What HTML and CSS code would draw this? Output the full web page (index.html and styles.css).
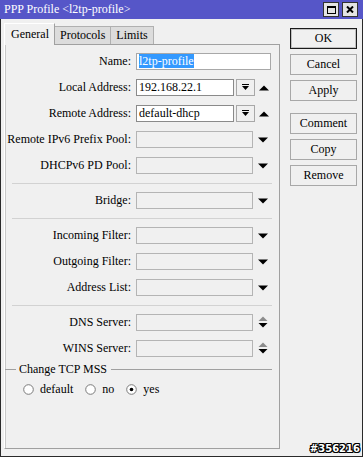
FILE: index.html
```html
<!DOCTYPE html>
<html lang="en">
  <head>
    <meta charset="UTF-8" />
    <title>PPP Profile</title>
    <link rel="stylesheet" href="styles.css">
  </head>
  <body>
    <div class="window">
      <div class="titlebar">
        <span class="title">PPP Profile &lt;l2tp-profile&gt;</span>
        <div class="win-btns">
          <span class="win-btn">
            <svg width="9" height="8" viewBox="0 0 9 8"><rect x="0.5" y="0.5" width="8" height="7" fill="none" stroke="#000"/><rect x="0" y="0" width="9" height="2" fill="#000"/></svg>
          </span>
          <span class="win-btn">
            <svg width="8" height="7" viewBox="0 0 8 7"><path d="M1 0.5 L7 6.5 M7 0.5 L1 6.5" stroke="#000" stroke-width="2"/></svg>
          </span>
        </div>
      </div>

      <div class="main">
        <div class="left">
          <div class="tabs">
            <div class="tab active">General</div>
            <div class="tab">Protocols</div>
            <div class="tab">Limits</div>
          </div>

          <div class="panel">
            <div class="row">
              <label>Name:</label>
              <div class="field w-full"><span class="sel">l2tp-profile</span></div>
            </div>
            <div class="row">
              <label>Local Address:</label>
              <div class="field w-drop">192.168.22.1</div>
              <span class="drop-btn">
                <svg width="7" height="7" viewBox="0 0 7 7"><rect x="0" y="0" width="7" height="1" fill="#000"/><polygon points="0,2 7,2 3.5,6" fill="#000"/></svg>
              </span>
              <svg class="arrow" width="10" height="6" viewBox="0 0 10 6"><polygon points="0,5.5 10,5.5 5,0.5" fill="#000"/></svg>
            </div>
            <div class="row">
              <label>Remote Address:</label>
              <div class="field w-drop">default-dhcp</div>
              <span class="drop-btn">
                <svg width="7" height="7" viewBox="0 0 7 7"><rect x="0" y="0" width="7" height="1" fill="#000"/><polygon points="0,2 7,2 3.5,6" fill="#000"/></svg>
              </span>
              <svg class="arrow" width="10" height="6" viewBox="0 0 10 6"><polygon points="0,5.5 10,5.5 5,0.5" fill="#000"/></svg>
            </div>
            <div class="row">
              <label>Remote IPv6 Prefix Pool:</label>
              <div class="field off w-half"></div>
              <svg class="arrow down" width="10" height="6" viewBox="0 0 10 6"><polygon points="0,0.5 10,0.5 5,5.5" fill="#000"/></svg>
            </div>
            <div class="row">
              <label>DHCPv6 PD Pool:</label>
              <div class="field off w-half"></div>
              <svg class="arrow down" width="10" height="6" viewBox="0 0 10 6"><polygon points="0,0.5 10,0.5 5,5.5" fill="#000"/></svg>
            </div>

            <div class="sep"></div>

            <div class="row">
              <label>Bridge:</label>
              <div class="field off w-half"></div>
              <svg class="arrow down" width="10" height="6" viewBox="0 0 10 6"><polygon points="0,0.5 10,0.5 5,5.5" fill="#000"/></svg>
            </div>

            <div class="sep"></div>

            <div class="row">
              <label>Incoming Filter:</label>
              <div class="field off w-half"></div>
              <svg class="arrow down" width="10" height="6" viewBox="0 0 10 6"><polygon points="0,0.5 10,0.5 5,5.5" fill="#000"/></svg>
            </div>
            <div class="row">
              <label>Outgoing Filter:</label>
              <div class="field off w-half"></div>
              <svg class="arrow down" width="10" height="6" viewBox="0 0 10 6"><polygon points="0,0.5 10,0.5 5,5.5" fill="#000"/></svg>
            </div>
            <div class="row">
              <label>Address List:</label>
              <div class="field off w-half"></div>
              <svg class="arrow down" width="10" height="6" viewBox="0 0 10 6"><polygon points="0,0.5 10,0.5 5,5.5" fill="#000"/></svg>
            </div>

            <div class="sep"></div>

            <div class="row">
              <label>DNS Server:</label>
              <div class="field off w-half"></div>
              <svg class="arrow spin" width="10" height="13" viewBox="0 0 10 13"><polygon points="0.5,5 9.5,5 5,0.5" fill="#8c8c8c"/><polygon points="0.5,7 9.5,7 5,11.5" fill="#000"/></svg>
            </div>
            <div class="row last">
              <label>WINS Server:</label>
              <div class="field off w-half"></div>
              <svg class="arrow spin" width="10" height="13" viewBox="0 0 10 13"><polygon points="0.5,5 9.5,5 5,0.5" fill="#8c8c8c"/><polygon points="0.5,7 9.5,7 5,11.5" fill="#000"/></svg>
            </div>

            <div class="group">
              <span>Change TCP MSS</span>
            </div>
            <div class="radios">
              <div class="radio">
                <svg width="11" height="11" viewBox="0 0 11 11"><circle cx="5.5" cy="5.5" r="4.8" fill="#fff" stroke="#7a7a7a"/></svg>
                <span>default</span>
              </div>
              <div class="radio">
                <svg width="11" height="11" viewBox="0 0 11 11"><circle cx="5.5" cy="5.5" r="4.8" fill="#fff" stroke="#7a7a7a"/></svg>
                <span>no</span>
              </div>
              <div class="radio">
                <svg width="11" height="11" viewBox="0 0 11 11"><circle cx="5.5" cy="5.5" r="4.8" fill="#fff" stroke="#7a7a7a"/><circle cx="5.5" cy="5.5" r="1.8" fill="#000"/></svg>
                <span>yes</span>
              </div>
            </div>
          </div>
        </div>

        <div class="side">
          <div class="btn default">OK</div>
          <div class="btn">Cancel</div>
          <div class="btn">Apply</div>
          <div class="btn spaced">Comment</div>
          <div class="btn">Copy</div>
          <div class="btn">Remove</div>
          <div class="status">#356216</div>
        </div>
      </div>
    </div>
  </body>
</html>
```

FILE: styles.css
```css
body {
  margin: 0;
  font-family: "Liberation Serif", "Times New Roman", serif;
  font-size: 12px;
  color: #000;
  background-color: #f0f0f0;
}
.window {
  width: 363px;
  height: 457px;
  box-sizing: border-box;
  border: 1px solid #2a2a2a;
  border-top: none;
  background-color: #f0f0f0;
  display: flex;
  flex-direction: column;
}
.titlebar {
  height: 19px;
  margin: 0 -1px;
  background-color: #5656c8;
  display: flex;
  align-items: center;
  justify-content: space-between;
  padding: 0 5px 0 4px;
}
.title {
  color: #fff;
  font-size: 12px;
}
.win-btns {
  display: flex;
  gap: 3px;
}
.win-btn {
  width: 16px;
  height: 15px;
  box-sizing: border-box;
  background-color: #e4e4e4;
  border: 1px solid #333;
  display: flex;
  align-items: center;
  justify-content: center;
}
.main {
  flex: 1;
  display: flex;
  padding-left: 3px;
}
.left {
  width: 276px;
  margin: 3px 0 7px;
  display: flex;
  flex-direction: column;
}
.tabs {
  height: 22px;
  display: flex;
  align-items: flex-end;
}
.tab {
  height: 18px;
  box-sizing: border-box;
  padding: 0 5px;
  line-height: 16px;
  font-size: 12px;
  background-color: #dcdcdc;
  border: 1px solid #b0b0b0;
  border-bottom: none;
  border-left: none;
}
.tab.active {
  height: 22px;
  margin-bottom: -1px;
  padding: 2px 5px 0 6px;
  background-color: #f0f0f0;
  border-left: 1px solid #fff;
  border-top: 1px solid #fff;
  border-right: 1px solid #a0a0a0;
  position: relative;
  z-index: 1;
}
.panel {
  flex: 1;
  border: 1px solid #a0a0a0;
  border-left-color: #fff;
  box-shadow: inset 1px 0 #c8c8c8;
  padding: 8px 7px 0 0;
}
.row {
  display: flex;
  align-items: center;
  height: 17px;
  margin-bottom: 9px;
}
.row.last {
  margin-bottom: 6px;
}
.row label {
  width: 126px;
  margin-right: 5px;
  text-align: right;
  white-space: nowrap;
}
.field {
  height: 17px;
  box-sizing: border-box;
  border: 1px solid #8a8a8a;
  background-color: #fff;
  padding-left: 2px;
  line-height: 15px;
  white-space: nowrap;
  overflow: hidden;
}
.field.off {
  background-color: #f0f0f0;
  border-color: #b4b4b4;
}
.w-full {
  width: 135px;
  border-color: #a8a8a8;
}
.w-drop {
  width: 98px;
}
.w-half {
  width: 117px;
}
.sel {
  background-color: #3399ff;
  color: #fff;
}
.drop-btn {
  width: 19px;
  height: 17px;
  margin-left: 2px;
  box-sizing: border-box;
  border: 1px solid #a8a8a8;
  background-color: #f0f0f0;
  display: flex;
  align-items: center;
  justify-content: center;
}
.arrow {
  margin-left: 4px;
}
.arrow.down,
.arrow.spin {
  margin-left: 5px;
}
.sep {
  height: 1px;
  margin: 1px 0 8px 7px;
  background-color: #d2d2d2;
}
.group {
  height: 13px;
  display: flex;
  align-items: center;
  gap: 3px;
}
.group::before {
  content: "";
  width: 11px;
  height: 1px;
  background-color: #a0a0a0;
}
.group::after {
  content: "";
  flex: 1;
  height: 1px;
  margin-left: 1px;
  background-color: #a0a0a0;
}
.radios {
  height: 13px;
  margin-top: 7px;
  padding-left: 18px;
  display: flex;
  align-items: center;
  gap: 12px;
}
.radio {
  display: flex;
  align-items: center;
  gap: 6px;
}
.radio svg {
  display: block;
}
.side {
  width: 71px;
  margin-left: 10px;
  padding-top: 9px;
  display: flex;
  flex-direction: column;
  gap: 5px;
}
.btn {
  width: 67px;
  height: 21px;
  box-sizing: border-box;
  border: 1px solid #a8a8a8;
  background-color: #f0f0f0;
  text-align: center;
  line-height: 19px;
  font-size: 12px;
}
.btn.default {
  border-color: #1a1a1a;
  box-shadow: inset 0 0 0 1px #c0c0c0;
}
.btn.spaced {
  margin-top: 7px;
}
.status {
  margin-top: auto;
  margin-bottom: 1px;
  padding-right: 1px;
  text-align: right;
  font-family: "DejaVu Sans", sans-serif;
  font-weight: bold;
  font-size: 10px;
  line-height: 12px;
  color: #fff;
  text-shadow: 1px 0 #000, -1px 0 #000, 0 1px #000, 0 -1px #000, 1px 1px #000, -1px -1px #000, 1px -1px #000, -1px 1px #000;
}
```
